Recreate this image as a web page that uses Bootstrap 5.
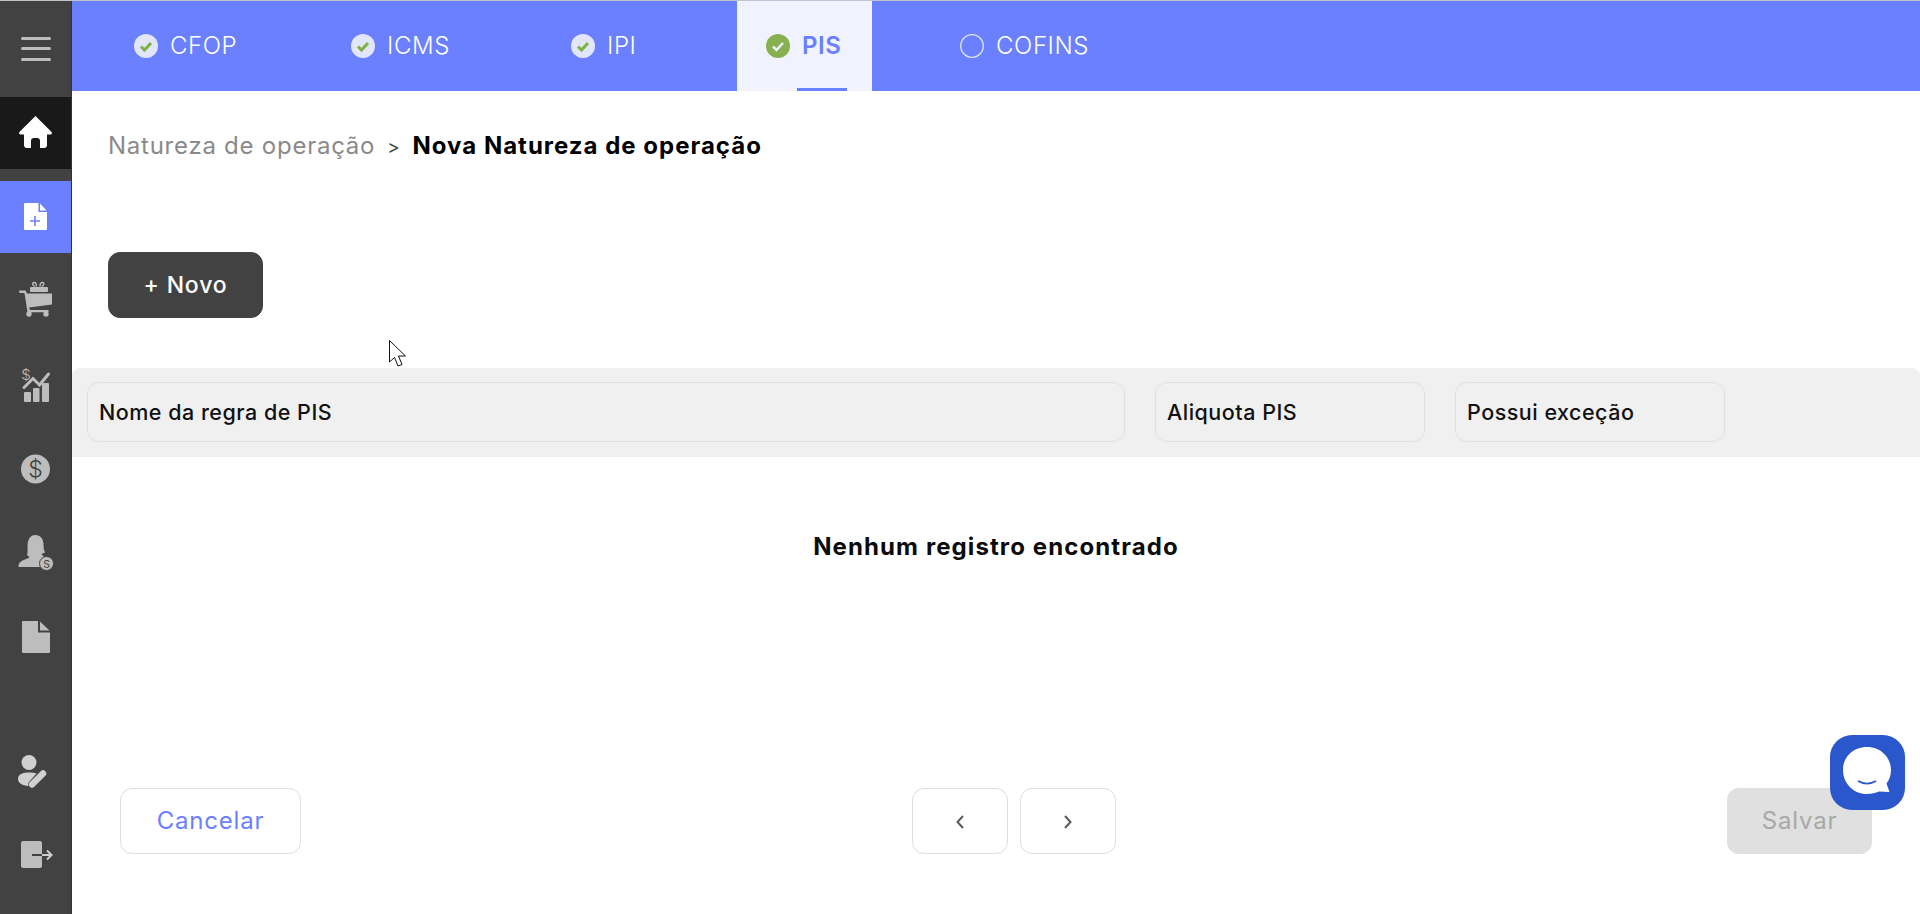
<!DOCTYPE html>
<html lang="pt-BR">
<head>
    <meta charset="UTF-8">
    <meta name="viewport" content="width=device-width, initial-scale=1.0">
    <title>Nova Natureza de operação</title>
    <link href="https://cdn.jsdelivr.net/npm/bootstrap@5.3.0/dist/css/bootstrap.min.css" rel="stylesheet">
    <style>
        body { font-family: Inter, "Open Sans", sans-serif; background: #fff; border-top: 1px solid #bfc3cc; }
        .side-bar { width: 72px; background: #424242; border-right: 1px solid #333; }
        .side-top { height: 96px; }
        .side-item { height: 72px; margin-bottom: 12px; }
        .side-item svg, .side-top svg { display: block; }
        .side-home { background: #191919; }
        .side-current { background: #6a80ff; }
        .side-gap { height: 50px; }
        .tab-bar { height: 90px; background: #6a80ff; padding-left: 62px; color: #fff; font-weight: 300; font-size: 24px; letter-spacing: .6px; }
        .tab-item { height: 90px; gap: 12px; }
        .tab-cfop { width: 217px; }
        .tab-icms { width: 220px; }
        .tab-ipi { width: 166px; }
        .tab-pis { width: 135px; padding-left: 29px; background: #f0f2fe; color: #6a80ff; font-weight: 600; margin-right: 61px; }
        .tab-pis::after { content: ""; position: absolute; left: 60px; bottom: 0; width: 50px; height: 3px; background: #6a80ff; }
        .tab-cofins { padding-left: 27px; }
        .page-trail { padding: 29px 0 0 36px; height: 161px; font-size: 24px; line-height: 52px; color: #8a8a8a; letter-spacing: .75px; }
        .page-trail span { color: #444; font-size: 19px; margin: 0 12px 0 12px; }
        .page-trail strong { color: #000; font-weight: 700; font-size: 24px; letter-spacing: 1px; }
        .new-btn { margin-left: 36px; width: 155px; height: 66px; background: #424242; border-color: #424242; color: #fff; font-size: 23px; letter-spacing: .8px; font-weight: 500; border-radius: 12px; }
        .new-btn:hover { background: #333; color: #fff; }
        .head-band { margin-top: 50px; height: 89px; background: #f0f0f0; padding: 14px 0 0 15px; gap: 30px; border-radius: 8px 8px 0 0; }
        .head-cell { height: 60px; border: 1px solid #e0e0e0; border-radius: 12px; padding-left: 11px; font-size: 21.5px; letter-spacing: .5px; font-weight: 500; color: #111; line-height: 58px; }
        .cell-name { width: 1038px; }
        .cell-small { width: 270px; }
        .empty-text { margin-top: 72px; height: 36px; font-size: 24px; letter-spacing: 1.1px; font-weight: 700; line-height: 36px; color: #0b0b0b; }
        .foot-row { margin-top: auto; padding: 0 48px; margin-bottom: 60px; }
        .foot-btn { height: 66px; border-radius: 12px; font-size: 24px; letter-spacing: .8px; font-weight: 400; }
        .cancel-btn { width: 181px; border: 1px solid #dedede; color: #6a80ff; background: #fff; }
        .step-group { gap: 12px; }
        .step-btn { width: 96px; border: 1px solid #dedede; background: #fff; }
        .save-btn:disabled { width: 145px; background: #e0e0e0; color: #a8a8a8; border: 0; opacity: 1; }
        .chat-widget { position: fixed; left: 1830px; top: 735px; width: 75px; height: 75px; }
        .mouse-arrow { position: fixed; left: 388px; top: 339px; }
    </style>
</head>
<body class="vh-100 overflow-hidden d-flex">
    <aside class="side-bar flex-shrink-0 d-flex flex-column">
        <div class="side-top">
            <svg width="71" height="96" viewBox="0 0 71 96" fill="#bdbdbd"><rect x="21" y="36" width="30" height="3" rx="1.5"/><rect x="21" y="46" width="30" height="3" rx="1.5"/><rect x="21" y="57" width="30" height="3" rx="1.5"/></svg>
        </div>
        <div class="side-item side-home">
            <svg width="71" height="72" viewBox="0 0 71 72" fill="#fff"><path d="M35.5 19 51.6 35q1 2.2-1.2 2.6H47V48q0 3-3 3h-4v-7q0-3-3-3h-3q-3 0-3 3v7h-4q-3 0-3-3V37.6h-3.4q-2.2-.4-1.2-2.6z"/></svg>
        </div>
        <div class="side-item side-current">
            <svg width="71" height="72" viewBox="0 0 71 72" fill="#fff"><path d="M24 23q0-1 1-1h13.500v9H47v17q0 1-1 1H25q-1 0-1-1z"/><path d="M40 22.500 46.500 29.500H40z"/><path d="M35 35v10M30 40h10" stroke="#6a80ff" stroke-width="1.600"/></svg>
        </div>
        <div class="side-item">
            <svg width="71" height="72" viewBox="0 0 71 72" fill="#bdbdbd"><path d="M19 25.500h6.500l1.500 3h25v11l-23 3 1 2.500h18.500v2.200H27.500L24.500 28H19.500z"/><rect x="30" y="22" width="18" height="5" rx="1"/><path d="M35 21.500c-3-1-3-4-1-4s2.500 2 2.500 4m5 0c3-1 3-4 1-4s-2.500 2-2.500 4" fill="none" stroke="#bdbdbd" stroke-width="1.300"/><circle cx="29" cy="49" r="2.700"/><circle cx="46" cy="49" r="2.700"/></svg>
        </div>
        <div class="side-item">
            <svg width="71" height="72" viewBox="0 0 71 72" fill="#bdbdbd"><text x="26" y="31" font-size="15" font-family="Inter, sans-serif" font-weight="300" text-anchor="middle">$</text><path d="M24 38.500 33 29.500 39.500 36 48.500 25" fill="none" stroke="#bdbdbd" stroke-width="3" stroke-linecap="round"/><rect x="24" y="43" width="7" height="10" rx="1"/><rect x="33" y="39" width="6.500" height="14" rx="1"/><rect x="42" y="34" width="7" height="19" rx="1"/></svg>
        </div>
        <div class="side-item">
            <svg width="71" height="72" viewBox="0 0 71 72"><circle cx="35.500" cy="36" r="14.500" fill="#bdbdbd"/><text x="35.500" y="44" font-size="23" font-family="Inter, sans-serif" font-weight="300" text-anchor="middle" fill="#424242">$</text></svg>
        </div>
        <div class="side-item">
            <svg width="71" height="72" viewBox="0 0 71 72"><path d="M35 18c5.500 0 8.500 4 8.500 9.500 0 3 .5 6 1.500 8l-3.500 1.500 2.500 3-1 10H18.500c0-5 3-6 6.500-7.500 2.500-1 4-1.500 4.500-2.500-1-.5-2-1.500-2.500-2.500 1-2 .5-5 .5-8.500 0-6 2.500-11 7.500-11z" fill="#bdbdbd"/><circle cx="46.500" cy="46.500" r="7" fill="#bdbdbd" stroke="#424242"/><text x="46.500" y="50.500" font-size="10.500" font-family="Inter, sans-serif" text-anchor="middle" fill="#424242">S</text></svg>
        </div>
        <div class="side-item">
            <svg width="71" height="72" viewBox="0 0 71 72" fill="#bdbdbd"><path d="M22 21q0-1 1-1h15v11.500h12V51q0 1-1 1H23q-1 0-1-1z"/><path d="M40 20.500 49.500 29.500H40z"/></svg>
        </div>
        <div class="side-gap"></div>
        <div class="side-item">
            <svg width="71" height="72" viewBox="0 0 71 72" fill="#d0d0d0"><circle cx="29" cy="27.500" r="7.500"/><path d="M18 44c0-5 5-6.500 11-6.500 3 0 5.500.3 7.500 1L29 47c-1 1-1 2-1 4-5-.5-10-2.500-10-7z"/><path d="M32 49.500 43 38.500" stroke="#d0d0d0" stroke-width="6.500" stroke-linecap="round"/></svg>
        </div>
        <div class="side-item">
            <svg width="71" height="72" viewBox="0 0 71 72"><rect x="21" y="22" width="21" height="27" rx="2" fill="#bdbdbd"/><path d="M32 36H42" stroke="#424242" stroke-width="2"/><path d="M42 36H51M47 31.500 51.500 36 47 40.500" fill="none" stroke="#d0d0d0" stroke-width="2"/></svg>
        </div>
    </aside>

    <main class="flex-grow-1 d-flex flex-column">
        <nav class="tab-bar d-flex">
            <div class="tab-item tab-cfop d-flex align-items-center">
                <svg width="24" height="24" viewBox="0 0 24 24"><circle cx="12" cy="12" r="12" fill="#e2e6fb"/><path d="M7 12.500 10.500 16 17 9" fill="none" stroke="#7fb341" stroke-width="3"/></svg>
                <span>CFOP</span>
            </div>
            <div class="tab-item tab-icms d-flex align-items-center">
                <svg width="24" height="24" viewBox="0 0 24 24"><circle cx="12" cy="12" r="12" fill="#e2e6fb"/><path d="M7 12.500 10.500 16 17 9" fill="none" stroke="#7fb341" stroke-width="3"/></svg>
                <span>ICMS</span>
            </div>
            <div class="tab-item tab-ipi d-flex align-items-center">
                <svg width="24" height="24" viewBox="0 0 24 24"><circle cx="12" cy="12" r="12" fill="#e2e6fb"/><path d="M7 12.500 10.500 16 17 9" fill="none" stroke="#7fb341" stroke-width="3"/></svg>
                <span>IPI</span>
            </div>
            <div class="tab-item tab-pis d-flex align-items-center position-relative">
                <svg width="24" height="24" viewBox="0 0 24 24"><circle cx="12" cy="12" r="12" fill="#87b04f"/><path d="M7 12.500 10.500 16 17 9" fill="none" stroke="#f0f2fe" stroke-width="2.500"/></svg>
                <span>PIS</span>
            </div>
            <div class="tab-item tab-cofins d-flex align-items-center">
                <svg width="24" height="24" viewBox="0 0 24 24"><circle cx="12" cy="12" r="11.300" fill="none" stroke="#e2e6fb" stroke-width="1.300"/></svg>
                <span>COFINS</span>
            </div>
        </nav>

        <div class="page-trail">Natureza de operação<span>&gt;</span><strong>Nova Natureza de operação</strong></div>

        <div><button type="button" class="btn new-btn">+ Novo</button></div>

        <div class="head-band d-flex">
            <div class="head-cell cell-name">Nome da regra de PIS</div>
            <div class="head-cell cell-small">Aliquota PIS</div>
            <div class="head-cell cell-small">Possui exceção</div>
        </div>

        <div class="empty-text text-center">Nenhum registro encontrado</div>

        <div class="foot-row d-flex justify-content-between">
            <button type="button" class="btn foot-btn cancel-btn">Cancelar</button>
            <div class="d-flex step-group">
                <button type="button" class="btn foot-btn step-btn" aria-label="Anterior"><svg width="10" height="14" viewBox="0 0 10 14"><path d="M8 1 2.500 7 8 13" fill="none" stroke="#5a5a5a" stroke-width="2"/></svg></button>
                <button type="button" class="btn foot-btn step-btn" aria-label="Próximo"><svg width="10" height="14" viewBox="0 0 10 14"><path d="M2 1 7.500 7 2 13" fill="none" stroke="#5a5a5a" stroke-width="2"/></svg></button>
            </div>
            <button type="button" class="btn foot-btn save-btn" disabled>Salvar</button>
        </div>
    </main>

    <svg class="chat-widget" viewBox="0 0 75 75"><rect width="75" height="75" rx="22" fill="#2a57cc"/><path d="M37 12c13.500 0 24 10 24 23 0 5-1.500 9.500-4.500 13.500L59.500 57 49 56.500c-3.500 1.500-7.500 2.500-12 2.500-13.500 0-24-10.500-24-24S23.500 12 37 12z" fill="#fff"/><path d="M28 46c6 3.500 12 3.500 18 0" fill="none" stroke="#2a57cc" stroke-width="1.800"/></svg>
    <svg class="mouse-arrow" width="22" height="30" viewBox="0 0 22 30"><path d="M1.500 1.500V23l5-4.500 3.500 8.500 4-1.500-3.500-8.500h7z" fill="#fff" stroke="#111" stroke-width="1"/></svg>

    <script src="https://cdn.jsdelivr.net/npm/bootstrap@5.3.0/dist/js/bootstrap.bundle.min.js"></script>
</body>
</html>
